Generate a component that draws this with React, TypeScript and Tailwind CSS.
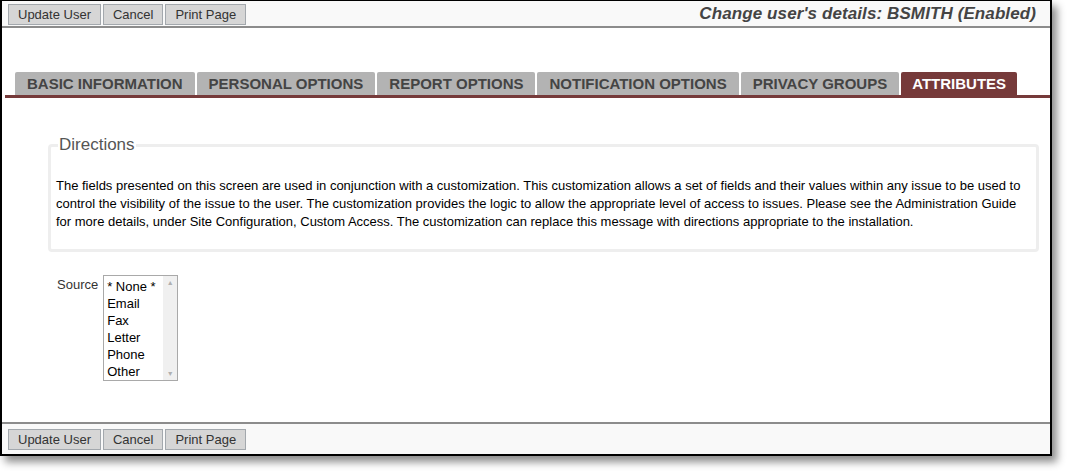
const buttons = ["Update User", "Cancel", "Print Page"];

const tabs = [
  "BASIC INFORMATION",
  "PERSONAL OPTIONS",
  "REPORT OPTIONS",
  "NOTIFICATION OPTIONS",
  "PRIVACY GROUPS",
  "ATTRIBUTES",
];

const sources = ["* None *", "Email", "Fax", "Letter", "Phone", "Other"];

function ButtonBar() {
  return (
    <div className="flex gap-[2px] pl-[6px]">
      {buttons.map((b) => (
        <button
          key={b}
          className="h-[21px] border border-[#a3a8ad] bg-[#d6d6d6] px-[9px] text-[13px] leading-[19px] text-[#333]"
        >
          {b}
        </button>
      ))}
    </div>
  );
}

export default function App() {
  return (
    <div className="h-[471px] w-[1068px] bg-white font-['Liberation_Sans',Arial,sans-serif]">
      <div className="flex h-[456px] w-[1052px] flex-col border-2 border-t-[1px] border-black bg-white shadow-[5px_6px_8px_rgba(0,0,0,0.45)]">
        {/* top toolbar */}
        <div className="flex h-[27px] shrink-0 items-center justify-between border-b-2 border-[#8c8c8c] bg-[#f9f9f9] pt-[1px]">
          <ButtonBar />
          <h1 className="pr-[14px] text-[17px] font-bold italic tracking-[0.1px] text-[#444]">
            Change user's details: BSMITH (Enabled)
          </h1>
        </div>

        <div className="flex-1">
          {/* tabs */}
          <div className="ml-[3px] mt-[44px] flex gap-[2px] border-b-[3px] border-[#763a3a] pl-[10px]">
            {tabs.map((t) => (
              <div
                key={t}
                className={
                  t === "ATTRIBUTES"
                    ? "h-[23px] rounded-t-[2px] bg-[#763a3a] px-[11px] text-[15px] font-bold leading-[23px] text-white"
                    : "h-[23px] rounded-t-[2px] bg-[#b3b3b3] px-[12px] text-[15px] font-bold leading-[23px] text-[#444]"
                }
              >
                {t}
              </div>
            ))}
          </div>

          {/* directions */}
          <fieldset className="ml-[46px] mt-[38px] w-[991px] rounded-[4px] border-[3px] border-[#eeeeee] px-[5px] pb-[18px] pt-[23px]">
            <legend className="ml-[2px] px-[1px] text-[17px] leading-[18px] text-[#555]">
              Directions
            </legend>
            <p className="text-[13px] leading-[18px] text-[#000]">
              The fields presented on this screen are used in conjunction with a customization. This customization allows a set of fields and their values within any issue to be used to control the visibility of the issue to the user. The customization provides the logic to allow the appropriate level of access to issues. Please see the Administration Guide for more details, under Site Configuration, Custom Access. The customization can replace this message with directions appropriate to the installation.
            </p>
          </fieldset>

          {/* source */}
          <div className="ml-[55px] mt-[23px] flex gap-[5px]">
            <span className="pt-[2px] text-[13px] leading-[15px] text-[#333]">Source</span>
            <div className="flex h-[106px] w-[75px] border border-[#a9a9a9]">
              <ul className="flex-1 pl-[3px] pt-[2px] text-[13px] leading-[17px] text-[#000]">
                {sources.map((s) => (
                  <li key={s}>{s}</li>
                ))}
              </ul>
              <div className="flex w-[14px] flex-col items-center justify-between bg-[#f0f0f0] py-[3px] text-[7px] leading-none text-[#b0b0b0]">
                <span>▲</span>
                <span>▼</span>
              </div>
            </div>
          </div>
        </div>

        {/* bottom toolbar */}
        <div className="flex h-[32px] shrink-0 items-center border-t-2 border-[#8c8c8c] bg-[#f9f9f9]">
          <ButtonBar />
        </div>
      </div>
    </div>
  );
}
